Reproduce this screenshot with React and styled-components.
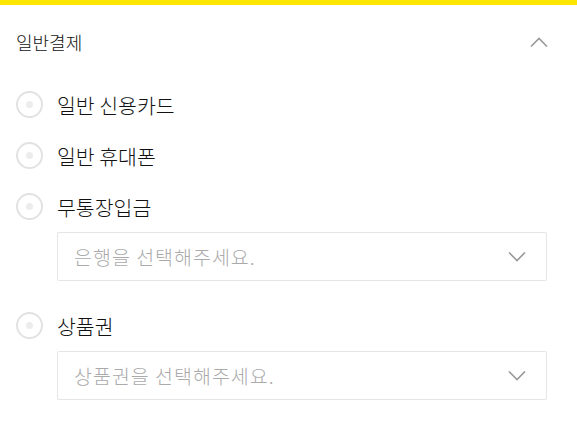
import React, { useState } from "react";
import styled, { createGlobalStyle } from "styled-components";

const GlobalStyle = createGlobalStyle`
  html, body {
    margin: 0;
    padding: 0;
    background: #fff;
  }
  body {
    font-family: "Noto Sans CJK KR", "Noto Sans", sans-serif;
    color: #111;
  }
`;

const Panel = styled.section`
  border-top: 5px solid #ffe600;
  padding: 0 30px 20px 16px;
  background: #fff;
`;

const Header = styled.div`
  display: flex;
  align-items: center;
  justify-content: space-between;
  height: 74px;
`;

const Title = styled.h3`
  margin: 0;
  font-size: 18px;
  font-weight: 300;
  color: #111;
`;

const ToggleButton = styled.button`
  display: flex;
  align-items: center;
  justify-content: center;
  width: 22px;
  height: 22px;
  margin-right: -3px;
  padding: 0;
  border: 0;
  background: none;
  cursor: pointer;
`;

const List = styled.div`
  display: flex;
  flex-direction: column;
`;

const Group = styled.div`
  display: flex;
  flex-direction: column;
  margin-bottom: ${(p) => (p.$spaced ? "19px" : "0")};
`;

const Row = styled.label`
  display: flex;
  align-items: center;
  gap: 14px;
  height: 51px;
  cursor: pointer;
`;

const Radio = styled.span`
  box-sizing: border-box;
  display: flex;
  align-items: center;
  justify-content: center;
  width: 27px;
  height: 27px;
  border: 2px solid ${(p) => (p.$checked ? "#ffd400" : "#e2e2e2")};
  border-radius: 50%;
  flex-shrink: 0;

  &::after {
    content: "";
    width: 7px;
    height: 7px;
    border-radius: 50%;
    background: ${(p) => (p.$checked ? "#ffd400" : "#ececec")};
  }
`;

const Label = styled.span`
  font-size: 20.5px;
  font-weight: 300;
  color: #111;
`;

const Select = styled.div`
  box-sizing: border-box;
  display: flex;
  align-items: center;
  justify-content: space-between;
  height: 49px;
  margin-left: 41px;
  padding: 0 20px 0 16px;
  border: 1px solid #e6e6e6;
  border-radius: 2px;
`;

const Placeholder = styled.span`
  font-size: 19.5px;
  font-weight: 300;
  letter-spacing: 1px;
  color: #aaa;
`;

const Chevron = ({ up }) => (
  <svg width="18" height="10" viewBox="0 0 18 10" fill="none">
    <path
      d={up ? "M1 9.5 L9 1.5 L17 9.5" : "M1 0.5 L9 8.5 L17 0.5"}
      stroke="#999"
      strokeWidth="1.6"
    />
  </svg>
);

const options = [
  { id: "card", label: "일반 신용카드" },
  { id: "phone", label: "일반 휴대폰" },
  { id: "bank", label: "무통장입금", select: "은행을 선택해주세요." },
  { id: "gift", label: "상품권", select: "상품권을 선택해주세요." },
];

export default function App() {
  const [checked, setChecked] = useState(null);

  return (
    <>
      <GlobalStyle />
      <Panel>
        <Header>
          <Title>일반결제</Title>
          <ToggleButton aria-label="접기">
            <Chevron up />
          </ToggleButton>
        </Header>
        <List>
          {options.map((o) => (
            <Group key={o.id} $spaced={!!o.select}>
              <Row onClick={() => setChecked(o.id)}>
                <Radio $checked={checked === o.id} />
                <Label>{o.label}</Label>
              </Row>
              {o.select && (
                <Select>
                  <Placeholder>{o.select}</Placeholder>
                  <Chevron />
                </Select>
              )}
            </Group>
          ))}
        </List>
      </Panel>
    </>
  );
}
